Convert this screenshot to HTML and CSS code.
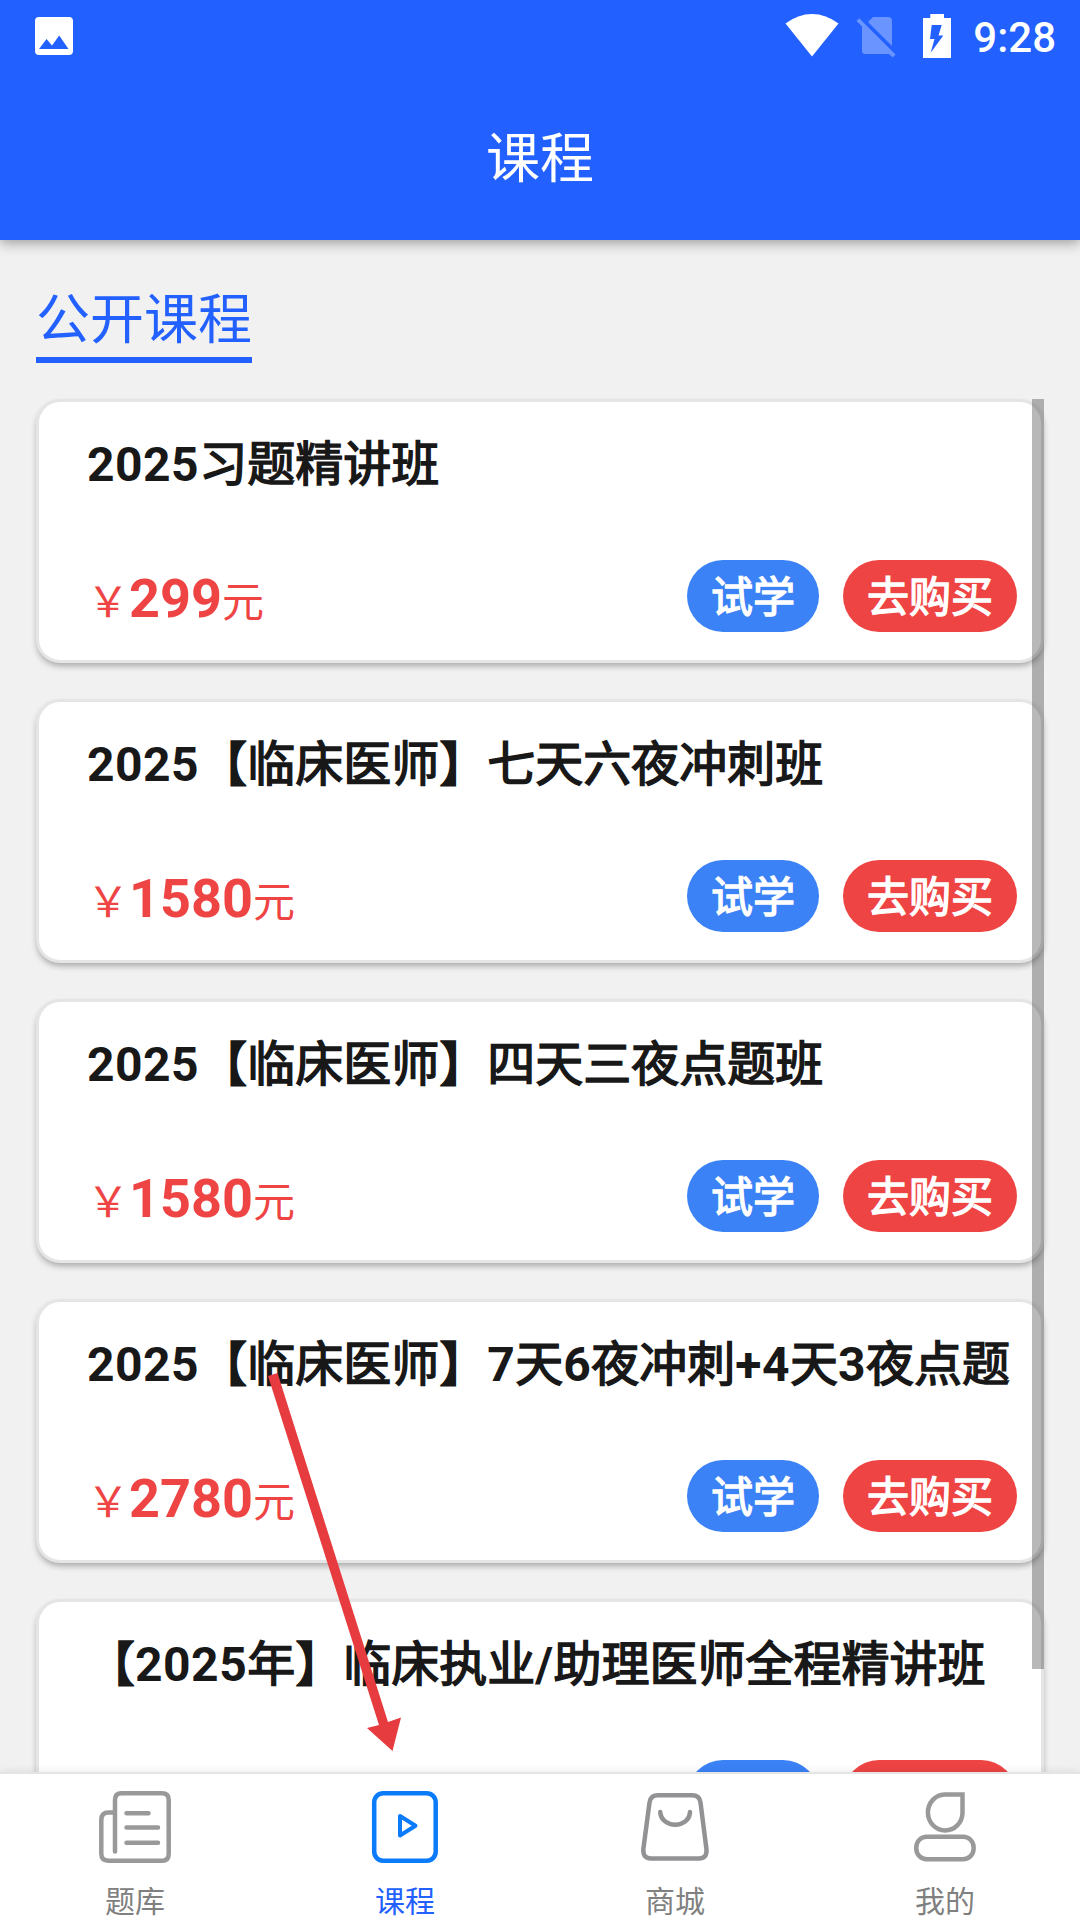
FILE: index.html
```html
<!DOCTYPE html>
<html lang="zh-CN">
<head>
<meta charset="utf-8">
<title>课程</title>
<link rel="stylesheet" href="styles.css">
</head>
<body>
<div class="screen">
  <header class="header">
    <div class="status">
      <svg class="status-photo" viewBox="0 0 38 40"><path fill="#fff" fill-rule="evenodd" d="M4 1H34a4 4 0 0 1 4 4V35a4 4 0 0 1-4 4H4a4 4 0 0 1-4-4V5a4 4 0 0 1 4-4ZM4 33H33.500L24.200 19.500 17 29.500 11.500 23Z"/></svg>
      <div class="status-right">
        <svg class="wifi" viewBox="0 0 54 43"><path fill="#fff" d="M0.500 9.500Q13 0 27 0T53.500 9.500L27 42.500Z"/></svg>
        <svg class="sim" viewBox="0 0 40 43"><path fill="#fff" fill-opacity=".33" d="M12 7 17 2H32q4 0 4 4V31ZM0.500 6 3.200 3.300 39.500 39.500 36.800 42.500 33 39H9q-3 0-3-3V11.500Z"/></svg>
        <svg class="battery" viewBox="0 0 28 44"><path fill="#fff" fill-rule="evenodd" d="M7.300 0H21V4H28V44H0V4H7.300ZM8.700 11 7 25H11.500L7.700 38.700 20.300 21.500H15.500L18.700 11Z"/></svg>
        <span class="clock">9:28</span>
      </div>
    </div>
    <h1 class="title">课程</h1>
  </header>

  <main class="content">
    <div class="section-tab">公开课程</div>
    <div class="list">
      <article class="card">
        <h2 class="card-title"><b>2025</b>习题精讲班</h2>
        <div class="card-foot">
          <div class="price">￥<b>299</b>元</div>
          <div class="actions"><span class="pill try">试学</span><span class="pill buy">去购买</span></div>
        </div>
      </article>
      <article class="card">
        <h2 class="card-title"><b>2025</b>【临床医师】七天六夜冲刺班</h2>
        <div class="card-foot">
          <div class="price">￥<b>1580</b>元</div>
          <div class="actions"><span class="pill try">试学</span><span class="pill buy">去购买</span></div>
        </div>
      </article>
      <article class="card">
        <h2 class="card-title"><b>2025</b>【临床医师】四天三夜点题班</h2>
        <div class="card-foot">
          <div class="price">￥<b>1580</b>元</div>
          <div class="actions"><span class="pill try">试学</span><span class="pill buy">去购买</span></div>
        </div>
      </article>
      <article class="card">
        <h2 class="card-title"><b>2025</b>【临床医师】<b>7</b>天<b>6</b>夜冲刺<b>+4</b>天<b>3</b>夜点题</h2>
        <div class="card-foot">
          <div class="price">￥<b>2780</b>元</div>
          <div class="actions"><span class="pill try">试学</span><span class="pill buy">去购买</span></div>
        </div>
      </article>
      <article class="card">
        <h2 class="card-title">【<b>2025</b>年】临床执业<b>/</b>助理医师全程精讲班</h2>
        <div class="card-foot">
          <div class="price"></div>
          <div class="actions"><span class="pill try">试学</span><span class="pill buy">去购买</span></div>
        </div>
      </article>
      <div class="scrollbar"></div>
    </div>
  </main>

  <nav class="tabs">
    <div class="tab">
      <svg class="tab-icon" viewBox="0 0 72 72" fill="none" stroke="#999" stroke-width="4.500" stroke-linecap="round" stroke-linejoin="round"><path d="M16 60.500V9Q16 2.300 22.500 2.300H63Q69.700 2.300 69.700 9V63Q69.700 69.700 63 69.700H9.500Q2.300 69.700 2.300 62.500V29Q2.300 21.500 9.500 21.500H14M27.500 22.300H49.500M27.500 36.500H59M27.500 51.700H59"/></svg>
      <span>题库</span>
    </div>
    <div class="tab active">
      <svg class="tab-icon" viewBox="0 0 72 72" fill="none" stroke="#0b7bfa" stroke-width="4.500" stroke-linejoin="round"><rect x="5.200" y="2.300" width="61.500" height="67.400" rx="9"/><path stroke-width="4" d="M31 25V44.500L46.500 34.800Z"/></svg>
      <span>课程</span>
    </div>
    <div class="tab">
      <svg class="tab-icon" viewBox="0 0 72 72" fill="none" stroke="#929295" stroke-width="4.500" stroke-linecap="round"><path d="M19 4.300H53Q60.500 4.300 61.500 11.500L67.500 58.500Q68 67.500 60 67.500H12Q4 67.500 4.300 58.500L10.500 11.500Q11.500 4.300 19 4.300ZM21.200 21C22.500 38 50 38 51 21"/></svg>
      <span>商城</span>
    </div>
    <div class="tab">
      <svg class="tab-icon" viewBox="0 0 72 72" fill="none" stroke="#999" stroke-width="4.500"><path d="M53.500 3.500H35.500A17.300 18 0 1 0 53.500 22Z"/><rect x="7.300" y="45.700" width="57.300" height="22.500" rx="10.500"/></svg>
      <span>我的</span>
    </div>
  </nav>

  <svg class="arrow" viewBox="0 0 136 382"><path fill="#e63c3f" d="M2 6 11.500 3 122 352 135 347.500 126.500 381 101 358 113 355Z"/></svg>
</div>
</body>
</html>
```
FILE: styles.css
```css
* { box-sizing: border-box; }
body { margin: 0; }
h1, h2 { margin: 0; }
svg { display: block; }

.screen {
  position: relative;
  display: flex;
  flex-direction: column;
  width: 1080px;
  height: 1920px;
  overflow: hidden;
  background: #f1f1f1;
  font-family: Roboto, "Noto Sans CJK SC", sans-serif;
}

.header {
  flex: none;
  height: 240px;
  background: #2260ff;
  color: #fff;
  box-shadow: 0 3px 12px rgba(0, 0, 0, .36);
}
.status {
  display: flex;
  justify-content: space-between;
  height: 72px;
  padding: 0 24px 0 35px;
}
.status-photo { width: 38px; height: 40px; margin-top: 16px; }
.status-right { display: flex; align-items: flex-start; padding-top: 14px; }
.wifi { width: 54px; height: 43px; }
.sim { width: 40px; height: 43px; margin: 1px 0 0 17px; }
.battery { width: 28px; height: 44px; margin-left: 27px; }
.clock {
  margin: 1px 0 0 22px;
  font-size: 42px;
  font-weight: 500;
  line-height: 46px;
}
.title {
  padding-top: 4px;
  font-size: 54px;
  font-weight: 400;
  line-height: 168px;
  text-align: center;
}

.content {
  flex: 1;
  min-height: 0;
  padding: 36px 36px 0;
  overflow: hidden;
}
.section-tab {
  width: 216px;
  height: 87px;
  padding-top: 4px;
  border-bottom: 6px solid #2260ff;
  color: #2260ff;
  font-size: 54px;
  line-height: 81px;
}
.list {
  position: relative;
  display: flex;
  flex-direction: column;
  gap: 36px;
  margin-top: 36px;
}
.card {
  display: flex;
  flex-direction: column;
  justify-content: space-between;
  height: 264px;
  padding: 27px 24px 28px 48px;
  border: 3px solid #e5e5e5;
  border-radius: 24px;
  background: #fff;
  box-shadow: 0 4px 6px -1px rgba(0, 0, 0, .3);
}
.card-title {
  color: #181818;
  font-size: 48px;
  font-weight: 400;
  line-height: 72px;
  white-space: nowrap;
  -webkit-text-stroke: 1.5px #181818;
}
/* Latin glyphs have a true bold face; Chinese glyphs are emboldened by the stroke. */
.card-title b {
  font-weight: 700;
  letter-spacing: .5px;
  -webkit-text-stroke: 0;
}
.card-foot {
  display: flex;
  align-items: center;
  justify-content: space-between;
  height: 72px;
}
.price {
  padding-top: 9px;
  color: #ef4444;
  font-size: 42px;
  line-height: 72px;
}
.price b { font-size: 54px; }
.actions { display: flex; gap: 24px; }
.pill {
  height: 72px;
  padding: 2px 24px 0;
  border-radius: 36px;
  color: #fff;
  font-size: 42px;
  line-height: 72px;
  -webkit-text-stroke: 1.4px #fff;
}
.try { background: #3b82f6; }
.buy { background: #ef4444; }
.scrollbar {
  position: absolute;
  top: 0;
  right: 0;
  width: 12px;
  height: 1270px;
  background: rgba(0, 0, 0, .28);
}

.tabs {
  position: relative;
  display: flex;
  flex: none;
  height: 148px;
  border-top: 2px solid #e4e4e4;
  background: #fff;
  box-shadow: 0 -1px 8px rgba(0, 0, 0, .08);
}
.tab {
  display: flex;
  flex: 1;
  flex-direction: column;
  align-items: center;
  gap: 17px;
  padding-top: 17px;
  color: #808080;
  font-size: 30px;
  line-height: 44px;
}
.tab.active { color: #2260ff; }
.tab-icon { flex: none; width: 72px; height: 72px; }

.arrow {
  position: absolute;
  left: 266px;
  top: 1370px;
  width: 136px;
  height: 382px;
}
```
